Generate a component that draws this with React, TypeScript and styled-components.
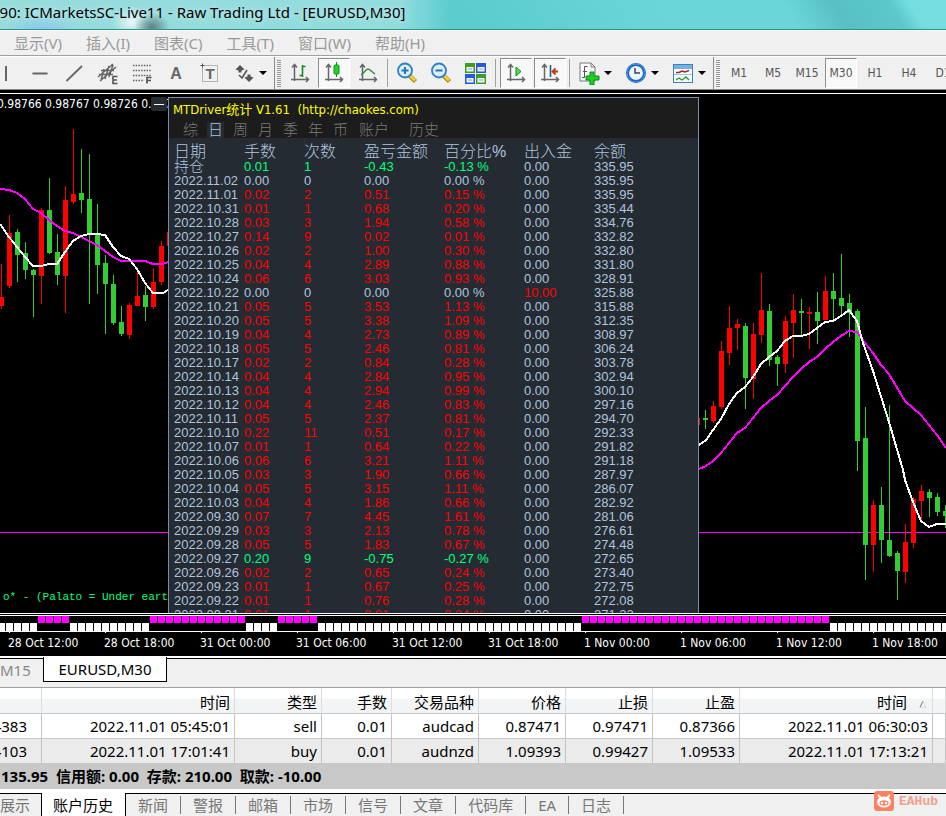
import React from "react";
import styled, { createGlobalStyle, css } from "styled-components";

const UI = `"Noto Sans", "Open Sans", "Noto Sans CJK SC", sans-serif`;
const TAHOMA = `"DejaVu Sans Condensed", "Noto Sans", "Noto Sans CJK SC", sans-serif`;
const ARIAL = `"Liberation Sans", "Noto Sans CJK SC", sans-serif`;

const GlobalStyle = createGlobalStyle`
  *, *::before, *::after { box-sizing: border-box; }
  body { margin: 0; background: #f0f0f0; font-family: ${UI}; font-size: 15px; color: #000; overflow: hidden; }
  button { font: inherit; color: inherit; background: none; border: 0; padding: 0; margin: 0; white-space: nowrap; }
`;

const Window = styled.main`
  display: flex;
  flex-direction: column;
  height: 100vh;
  min-width: 0;
  overflow: hidden;
`;

/* ---------- Title and menu ---------- */

const TitleBar = styled.header`
  height: 30px;
  flex: none;
  display: flex;
  align-items: center;
  padding-bottom: 5px;
  border-bottom: 1px solid #2f8f90;
  white-space: nowrap;
  overflow: hidden;
  background:
    radial-gradient(ellipse 36px 14px at 42px 29px, #8cc8ee 0, #8cc8ee00 100%),
    radial-gradient(ellipse 18px 14px at 152px 27px, #4d6b6ecc 0, #4d6b6e00 100%),
    radial-gradient(ellipse 20px 16px at 132px 22px, #ffffffcc 0, #ffffff00 100%),
    linear-gradient(90deg, #ffffff66 0, #ffffff55 400px, #ffffff00 450px),
    linear-gradient(60deg, #52c4c6 0, #5ccccf 50%, #69d5d9 68%, #6bd6da 83%, #57c0c4 88%, #5cc8cb 94%, #74dde0 96%);
`;

const Title = styled.h1`
  margin: 0 0 0 -9px;
  font-size: 15px;
  font-weight: 400;
  line-height: 20px;
  text-shadow: 0 0 6px #ffffffaa;
`;

const MenuBar = styled.nav`
  height: 26px;
  flex: none;
  display: flex;
  align-items: center;
  gap: 24px;
  padding-left: 14px;
  border-top: 1px solid #fff;
  border-bottom: 1px solid #a0a0a0;
  color: #999;
`;

const MenuItem = styled.button`
  line-height: 20px;
`;

/* ---------- Toolbar ---------- */

const Toolbar = styled.div`
  height: 34px;
  flex: none;
  display: flex;
  align-items: center;
  border-top: 1px solid #fff;
  border-bottom: 1px solid #8a8a8a;
  overflow: hidden;
`;

const ToolGroup = styled.div<{ $bleed?: boolean }>`
  height: 32px;
  flex: none;
  display: flex;
  align-items: center;
  gap: 2px;
  padding: 0 1px 0 2px;
  margin-left: ${(p) => (p.$bleed ? "-12px" : "0")};
  border-right: 1px solid #8a8a8a;
`;

const Grip = styled.span`
  width: 4px;
  height: 27px;
  flex: none;
  margin-right: 1px;
  background: repeating-linear-gradient(180deg, #999 0, #999 1px, transparent 1px, transparent 2px);
`;

const ToolButton = styled.button<{ $pressed?: boolean; $menu?: boolean }>`
  width: ${(p) => (p.$menu ? 45 : 32)}px;
  height: 30px;
  flex: none;
  display: flex;
  align-items: center;
  justify-content: ${(p) => (p.$menu ? "flex-start" : "center")};
  gap: 3px;
  padding-left: ${(p) => (p.$menu ? "3px" : "0")};
  border: 1px solid transparent;
  color: #555;
  font-family: ${TAHOMA};
  font-size: 12px;
  ${(p) =>
    p.$pressed &&
    css`
      border-color: #8f8f8f #fff #fff #8f8f8f;
      background: #f8f8f8;
    `}
`;

const Separator = styled.span<{ $wide?: boolean }>`
  width: 1px;
  height: 28px;
  flex: none;
  margin: 0 ${(p) => (p.$wide ? 2 : 1)}px;
  background: #a0a0a0;
`;

const Glyph = styled.svg`
  width: 24px;
  height: 24px;
  flex: none;
  display: block;
`;

const CaretShape = styled.svg`
  width: 8px;
  height: 4px;
  flex: none;
`;

const Caret = () => (
  <CaretShape viewBox="0 0 8 4" aria-hidden="true">
    <path d="M0 0h8L4 4z" fill="#000" />
  </CaretShape>
);

const Axes = () => (
  <path
    d="M6.5 4v16M3 18.5h17M4 6.5 6.5 3.5 9 6.5M18 16l2.500 2.500L18 21"
    fill="none"
    stroke="#666"
    strokeWidth="1.500"
  />
);

const icons: Record<string, React.ReactNode> = {
  vline: <path d="M12 5v15" stroke="#666" strokeWidth="2" />,
  hline: <path d="M4.500 12.500h15" stroke="#666" strokeWidth="2" />,
  trend: <path d="M4.500 20 20 5" stroke="#666" strokeWidth="1.800" />,
  channel: (
    <>
      <path
        d="M2 16 17 3M4 20 20 6M5 9.500h13M3 13.500h14M8 8 5 19M13 5 9 18M17 4l-4 12"
        fill="none"
        stroke="#666"
        strokeWidth="1.500"
      />
      <path d="M21.500 15.500H17v7h4.500M17 19h4" fill="none" stroke="#555" strokeWidth="1.600" />
    </>
  ),
  fibo: (
    <>
      <path d="M3 4.500h18M3 9.500h18M3 14.500h18M3 19.500h11" stroke="#666" strokeWidth="1.400" strokeDasharray="1.500 1.200" />
      <path d="M21.500 16.500H17v6M17 19.500h4" fill="none" stroke="#555" strokeWidth="1.700" />
    </>
  ),
  text: (
    <text x="12" y="18" textAnchor="middle" fontFamily="Liberation Sans, sans-serif" fontWeight="700" fontSize="16" fill="#666">
      A
    </text>
  ),
  label: (
    <>
      <rect x="4.500" y="4.500" width="15" height="16" fill="none" stroke="#777" strokeDasharray="1 1" />
      <path d="M2.500 4.500h4M4.500 2.500v4" stroke="#555" />
      <text x="12" y="18" textAnchor="middle" fontFamily="Liberation Sans, sans-serif" fontWeight="700" fontSize="15" fill="#666">
        T
      </text>
    </>
  ),
  arrows: (
    <>
      <path d="m8 4 4.500 4.500-3 1v2h-3v-2l-3-1zM17 21l-4.500-4.500 3-1v-2h3v2l3 1z" fill="#555" />
      <path d="m7 14 3 3 5-8" fill="none" stroke="#555" strokeWidth="1.600" />
    </>
  ),
  bars: (
    <>
      <Axes />
      <path d="M14.500 4v12M14.500 5.500h3M11.500 14.500h3" stroke="#158a24" strokeWidth="1.600" fill="none" />
    </>
  ),
  candles: (
    <>
      <Axes />
      <path d="M14.500 1v15" stroke="#158a24" />
      <rect x="12" y="4" width="5" height="9" rx="1" fill="#21d321" stroke="#158a24" />
    </>
  ),
  line: (
    <>
      <Axes />
      <path d="M5 14c3-2 5-6 7-6s4 3 7 5" fill="none" stroke="#2f8a3a" strokeWidth="1.400" />
    </>
  ),
  zoomIn: (
    <>
      <path d="m14.500 14.500 6 6" stroke="#b58513" strokeWidth="4.500" />
      <path d="m15 14.500 5 5" stroke="#f5d23c" strokeWidth="2.500" />
      <circle cx="10" cy="9.500" r="7" fill="#d7efff" stroke="#2e7fc4" strokeWidth="1.800" />
      <path d="M6.500 9.500h7M10 6v7" stroke="#2b73ad" strokeWidth="2" />
    </>
  ),
  zoomOut: (
    <>
      <path d="m14.500 14.500 6 6" stroke="#b58513" strokeWidth="4.500" />
      <path d="m15 14.500 5 5" stroke="#f5d23c" strokeWidth="2.500" />
      <circle cx="10" cy="9.500" r="7" fill="#d7efff" stroke="#2e7fc4" strokeWidth="1.800" />
      <path d="M6.500 9.500h7" stroke="#2b73ad" strokeWidth="2" />
    </>
  ),
  tile: (
    <>
      <rect x="2" y="2" width="10" height="10" fill="#3f9f1b" />
      <rect x="13" y="2" width="10" height="10" fill="#2b57d9" />
      <rect x="2" y="13" width="10" height="10" fill="#2b57d9" />
      <rect x="13" y="13" width="10" height="10" fill="#3f9f1b" />
      <path d="M3.500 6h7v4.500h-7zM14.500 6h7v4.500h-7zM3.500 17h7v4.500h-7zM14.500 17h7v4.500h-7z" fill="#eef5ff" />
      <path d="M5 8h4M16 8h4M5 19h4M16 19h4" stroke="#7fa6d8" />
    </>
  ),
  scroll: (
    <>
      <Axes />
      <path d="m12 6 5 4.500-5 4.500z" fill="#4be04b" stroke="#158a24" />
    </>
  ),
  shift: (
    <>
      <Axes />
      <path d="M12.500 4v12" stroke="#205f8f" strokeWidth="1.600" />
      <path d="M20 10.500h-5M17.500 7.500l-3 3 3 3" fill="none" stroke="#c43a0c" strokeWidth="1.800" />
    </>
  ),
  indicators: (
    <>
      <path d="M3 2h11l4 4v14H3z" fill="#fafafa" stroke="#777" />
      <path d="M14 2v4h4" fill="none" stroke="#777" />
      <path d="M10.500 5.500H7.500v11H5M6 10.500h4" fill="none" stroke="#555" />
      <path d="M13 11h4v4h5v4h-5v5h-4v-5H9v-4h4z" fill="#20d020" stroke="#0b8a12" />
    </>
  ),
  clock: (
    <>
      <circle cx="12" cy="12" r="8.500" fill="#eaf5ff" stroke="#1c62c0" strokeWidth="3" />
      <circle cx="12" cy="12" r="9" fill="none" stroke="#4a97e6" />
      <path d="M11 7v5h5" fill="none" stroke="#444" strokeWidth="1.500" />
    </>
  ),
  template: (
    <>
      <rect x="2.500" y="3.500" width="19" height="18" fill="#f4faff" stroke="#3f80bd" />
      <rect x="3" y="4" width="18" height="4" fill="#6fb1e8" />
      <path d="M5 11.500h3l3-1.500 3 1 4-1.500" fill="none" stroke="#b02222" strokeWidth="1.400" />
      <path d="M3 13.500h18" stroke="#9cc4e4" />
      <path d="m5 19 3-2 3 2 4-3 3 3" fill="none" stroke="#2b9a3a" strokeWidth="1.400" />
    </>
  ),
};

type ToolProps = { icon: string; label: string; pressed?: boolean; menu?: boolean };
const Tool = ({ icon, label, pressed, menu }: ToolProps) => (
  <ToolButton type="button" aria-label={label} title={label} $pressed={pressed} $menu={menu}>
    <Glyph viewBox="0 0 24 24" aria-hidden="true">
      {icons[icon]}
    </Glyph>
    {menu && <Caret />}
  </ToolButton>
);

/* ---------- Chart ---------- */

const ChartFrame = styled.section`
  flex: none;
  display: flex;
  flex-direction: column;
  padding-top: 3px;
  background: #000;
  color: #fff;
  border-bottom: 1px solid #fff;
`;

const ChartArea = styled.div`
  position: relative;
  height: 521px;
  overflow: hidden;
  border-top: 1px solid #fff;
  border-bottom: 1px solid #fff;
`;

const PriceChart = styled.svg`
  display: block;
  width: 100%;
  height: 519px;
`;

const Quote = styled.div`
  position: absolute;
  left: -3px;
  top: 2px;
  font-family: ${TAHOMA};
  font-size: 12px;
  line-height: 16px;
  white-space: nowrap;
`;

const Remark = styled.div`
  position: absolute;
  left: 0;
  bottom: 8px;
  width: 168px;
  overflow: hidden;
  white-space: nowrap;
  direction: rtl;
  font-family: "Liberation Mono", monospace;
  font-size: 11px;
  line-height: 16px;
  color: #00ff7f;
`;

const Collapse = styled.button`
  position: absolute;
  left: 151px;
  top: 3px;
  width: 16px;
  height: 14px;
  border-radius: 2px;
  background: #252b33;
  display: flex;
  align-items: center;
  justify-content: center;

  &::before {
    content: "";
    width: 10px;
    height: 1px;
    background: #fff;
  }
`;

const Panel = styled.section`
  position: absolute;
  left: 168px;
  top: 3px;
  bottom: 0;
  width: 531px;
  overflow: hidden;
  border: 1px solid #7b8ea8;
  border-bottom: 0;
  background: #252b33;
  color: #b0c4de;
  font-family: ${ARIAL};
`;

const PanelHead = styled.header`
  height: 40px;
  background: #1c1c1c;
`;

const PanelTitle = styled.h2`
  margin: 0;
  padding: 2px 0 0 4px;
  height: 24px;
  font-family: ${TAHOMA};
  font-size: 13px;
  line-height: 20px;
  font-weight: 400;
  color: #ffff00;
  white-space: pre;
`;

const PanelTabs = styled.div`
  display: flex;
  align-items: center;
  gap: 8px;
  padding-left: 13px;
  height: 16px;
`;

const PanelTab = styled.button<{ $active?: boolean; $wide?: boolean }>`
  min-width: 17px;
  margin: ${(p) => (p.$wide ? "0 12px 0 2px" : "0")};
  height: 16px;
  line-height: 16px;
  font-size: 15px;
  font-weight: 300;
  text-align: center;
  color: ${(p) => (p.$active ? "#b0c4de" : "#7a7a7a")};
  background: ${(p) => (p.$active ? "#252b33" : "transparent")};
`;

const StatTable = styled.table`
  margin: 6px 0 0 5px;
  width: 520px;
  border-collapse: collapse;
  table-layout: fixed;
  font-size: 13px;
`;

const StatHead = styled.th`
  padding: 0;
  height: 16px;
  font-size: 16px;
  line-height: 16px;
  font-weight: 300;
  text-align: left;
  white-space: nowrap;
`;

const tones = { flat: "#b0c4de", up: "#ff0000", down: "#00ff7f" };
type Tone = keyof typeof tones;

const StatCell = styled.td<{ $tone?: Tone; $big?: boolean }>`
  padding: 0;
  height: 14px;
  line-height: 14px;
  font-size: ${(p) => (p.$big ? 15 : 13)}px;
  font-weight: ${(p) => (p.$big ? 300 : 400)};
  white-space: nowrap;
  color: ${(p) => tones[p.$tone ?? "flat"]};
`;

const Strip = styled.svg`
  display: block;
  width: 100%;
  height: 18px;
  margin-top: 1px;
`;

const TimeAxis = styled.div`
  display: flex;
  height: 23px;
  padding-left: 8px;
  overflow: hidden;
  font-family: ${TAHOMA};
  font-size: 12px;
  line-height: 20px;
`;

const TimeLabel = styled.span`
  width: 96px;
  flex: none;
  white-space: nowrap;
`;

const GREEN = "#32cd32";
const RED = "#ff0000";

/* centre, high, low, body top, body bottom, rising */
const candles: [number, number, number, number, number, boolean][] = [
  [1, 264, 309, 297, 306, true],
  [9, 215, 288, 233, 286, true],
  [17, 229, 282, 232, 255, false],
  [25, 242, 279, 253, 270, false],
  [33, 269, 317, 270, 275, false],
  [41, 208, 304, 210, 276, true],
  [49, 178, 254, 210, 253, false],
  [57, 234, 285, 252, 275, false],
  [65, 186, 313, 200, 276, true],
  [73, 129, 204, 194, 202, true],
  [81, 149, 213, 193, 200, false],
  [89, 154, 304, 199, 234, false],
  [97, 204, 294, 234, 265, false],
  [105, 255, 334, 263, 284, false],
  [113, 275, 325, 284, 323, false],
  [121, 306, 336, 322, 334, false],
  [129, 303, 339, 305, 335, true],
  [137, 268, 306, 296, 306, true],
  [145, 286, 321, 295, 307, false],
  [153, 268, 309, 282, 307, true],
  [161, 241, 285, 246, 282, true],
  [169, 232, 246, 232, 246, true],
  [697, 418, 425, 418, 425, true],
  [705, 410, 429, 418, 420, false],
  [713, 401, 423, 406, 421, true],
  [721, 341, 409, 351, 407, true],
  [729, 306, 365, 328, 353, true],
  [737, 319, 350, 324, 328, true],
  [745, 323, 409, 326, 378, false],
  [753, 323, 399, 334, 379, true],
  [761, 273, 343, 310, 335, true],
  [769, 304, 366, 311, 360, false],
  [777, 355, 386, 357, 364, false],
  [785, 316, 373, 321, 364, true],
  [793, 294, 358, 310, 323, true],
  [801, 299, 335, 311, 313, false],
  [809, 307, 349, 312, 314, true],
  [817, 292, 344, 312, 321, false],
  [825, 276, 320, 291, 320, true],
  [833, 273, 320, 291, 299, false],
  [841, 254, 314, 298, 306, false],
  [849, 294, 337, 303, 313, false],
  [857, 309, 471, 311, 441, false],
  [865, 407, 580, 438, 545, false],
  [873, 500, 572, 505, 545, true],
  [881, 487, 563, 505, 540, false],
  [889, 405, 557, 540, 556, false],
  [897, 551, 600, 553, 571, false],
  [905, 524, 583, 542, 572, true],
  [913, 497, 548, 499, 543, true],
  [921, 485, 521, 491, 501, true],
  [929, 489, 517, 492, 498, false],
  [937, 493, 516, 497, 512, false],
  [945, 505, 528, 511, 516, false],
];

const slowAverage = [
  "0,189 9,190 17,193 25,199 33,209 41,213 49,220 57,226 65,231 73,233 81,237 89,241 97,245 105,251 113,257 121,261 129,261 145,261 153,264 163,264 168,262",
  "699,469 706,466 713,461 721,453 729,443 737,433 745,428 753,418 761,408 769,401 777,395 785,386 793,377 801,369 809,362 817,357 825,349 833,342 841,336 849,331 857,332 865,343 873,353 881,365 889,374 905,401 921,415 937,435 946,448",
];
const fastAverage = [
  "0,224 9,237 17,247 25,257 33,266 41,266 49,264 57,264 65,252 73,241 81,236 89,234 97,234 105,235 113,247 121,256 129,259 137,269 145,283 153,293 163,293 168,290",
  "699,445 706,440 713,430 721,419 729,404 737,393 745,387 753,377 761,364 769,357 777,351 785,341 793,336 801,336 809,334 817,328 825,322 833,321 841,316 849,310 857,321 863,343 873,371 889,422 903,470 905,480 913,502 921,521 929,527 937,524 946,524",
];

const trendRuns = [
  [5, 8],
  [19, 30],
  [35, 39],
  [73, 103],
];
const blocks = Array.from({ length: 119 }, (_, i) => ({
  x: i * 8 - 2,
  up: trendRuns.some(([a, b]) => i >= a && i <= b),
}));

const times = [
  "28 Oct 12:00",
  "28 Oct 18:00",
  "31 Oct 00:00",
  "31 Oct 06:00",
  "31 Oct 12:00",
  "31 Oct 18:00",
  "1 Nov 00:00",
  "1 Nov 06:00",
  "1 Nov 12:00",
  "1 Nov 18:00",
];

const stats = `持仓|0.01|1|-0.43|-0.13|0.00|335.95
2022.11.02|0.00|0|0.00|0.00|0.00|335.95
2022.11.01|0.02|2|0.51|0.15|0.00|335.95
2022.10.31|0.01|1|0.68|0.20|0.00|335.44
2022.10.28|0.03|3|1.94|0.58|0.00|334.76
2022.10.27|0.14|9|0.02|0.01|0.00|332.82
2022.10.26|0.02|2|1.00|0.30|0.00|332.80
2022.10.25|0.04|4|2.89|0.88|0.00|331.80
2022.10.24|0.06|6|3.03|0.93|0.00|328.91
2022.10.22|0.00|0|0.00|0.00|10.00|325.88
2022.10.21|0.05|5|3.53|1.13|0.00|315.88
2022.10.20|0.05|5|3.38|1.09|0.00|312.35
2022.10.19|0.04|4|2.73|0.89|0.00|308.97
2022.10.18|0.05|5|2.46|0.81|0.00|306.24
2022.10.17|0.02|2|0.84|0.28|0.00|303.78
2022.10.14|0.04|4|2.84|0.95|0.00|302.94
2022.10.13|0.04|4|2.94|0.99|0.00|300.10
2022.10.12|0.04|4|2.46|0.83|0.00|297.16
2022.10.11|0.05|5|2.37|0.81|0.00|294.70
2022.10.10|0.22|11|0.51|0.17|0.00|292.33
2022.10.07|0.01|1|0.64|0.22|0.00|291.82
2022.10.06|0.06|6|3.21|1.11|0.00|291.18
2022.10.05|0.03|3|1.90|0.66|0.00|287.97
2022.10.04|0.05|5|3.15|1.11|0.00|286.07
2022.10.03|0.04|4|1.86|0.66|0.00|282.92
2022.09.30|0.07|7|4.45|1.61|0.00|281.06
2022.09.29|0.03|3|2.13|0.78|0.00|276.61
2022.09.28|0.05|5|1.83|0.67|0.00|274.48
2022.09.27|0.20|9|-0.75|-0.27|0.00|272.65
2022.09.26|0.02|2|0.65|0.24|0.00|273.40
2022.09.23|0.01|1|0.67|0.25|0.00|272.75
2022.09.22|0.01|1|0.76|0.28|0.00|272.08
2022.09.21|0.01|1|0.91|0.34|0.00|271.32`
  .split("\n")
  .map((line) => line.split("|"));

const StatRow = ({ row }: { row: string[] }) => {
  const [day, lots, count, profit, percent, cash, balance] = row;
  const value = Number(profit);
  const tone: Tone = value > 0 ? "up" : value < 0 ? "down" : "flat";
  return (
    <tr>
      <StatCell $big={day === "持仓"}>{day}</StatCell>
      <StatCell $tone={tone}>{lots}</StatCell>
      <StatCell $tone={tone}>{count}</StatCell>
      <StatCell $tone={tone}>{profit}</StatCell>
      <StatCell $tone={tone}>{percent} %</StatCell>
      <StatCell $tone={Number(cash) > 0 ? "up" : "flat"}>{cash}</StatCell>
      <StatCell>{balance}</StatCell>
    </tr>
  );
};

const Chart = () => (
  <ChartFrame aria-label="EURUSD,M30">
    <ChartArea>
      <PriceChart aria-hidden="true">
        <g transform="translate(0 -94)" shapeRendering="crispEdges">
          <rect x="0" y="532" width="100%" height="1" fill="#ff00ff" />
          {candles.map(([x, high, low, top, bottom, rising]) => (
            <g key={x} fill={rising ? RED : GREEN}>
              <rect x={x} y={high} width="1" height={low - high} />
              <rect x={x - 2} y={top} width="5" height={bottom - top} />
            </g>
          ))}
          {slowAverage.map((points) => (
            <polyline key={points} points={points} fill="none" stroke="#ff00ff" strokeWidth="2" />
          ))}
          {fastAverage.map((points) => (
            <polyline key={points} points={points} fill="none" stroke="#fff" strokeWidth="2" />
          ))}
        </g>
      </PriceChart>
      <Quote>0.98766 0.98767 0.98726 0.98742</Quote>
      <Remark>
        <bdi dir="ltr">o* - (Palato = Under eart</bdi>
      </Remark>
      <Collapse type="button" aria-label="收起" />
      <Panel>
        <PanelHead>
          <PanelTitle>{"MTDriver统计 V1.61  (http://chaokes.com)"}</PanelTitle>
          <PanelTabs>
            {["综", "日", "周", "月", "季", "年", "币", "账户", "历史"].map((tab) => (
              <PanelTab key={tab} type="button" $active={tab === "日"} $wide={tab === "账户"}>
                {tab}
              </PanelTab>
            ))}
          </PanelTabs>
        </PanelHead>
        <StatTable>
          <colgroup>
            {[70, 60, 60, 80, 80, 70, 100].map((width, i) => (
              <col key={i} width={width} />
            ))}
          </colgroup>
          <thead>
            <tr>
              {["日期", "手数", "次数", "盈亏金额", "百分比%", "出入金", "余额"].map((name) => (
                <StatHead key={name} scope="col">
                  {name}
                </StatHead>
              ))}
            </tr>
          </thead>
          <tbody>
            {stats.map((row) => (
              <StatRow key={row[0]} row={row} />
            ))}
          </tbody>
        </StatTable>
      </Panel>
    </ChartArea>
    <Strip aria-hidden="true">
      <rect width="100%" height="1" fill="#fff" />
      {blocks.map(({ x, up }) => (
        <rect key={x} x={x} y={up ? 1 : 8} width="7" height={up ? 7 : 9} fill={up ? "#ff00ff" : "#fff"} />
      ))}
      <rect y="16" width="100%" height="1" fill="#fff" />
      {times.map((time, i) => (
        <rect key={time} x={9 + i * 96} y="17" width="1" height="3" fill="#fff" />
      ))}
    </Strip>
    <TimeAxis>
      {times.map((time) => (
        <TimeLabel key={time}>{time}</TimeLabel>
      ))}
    </TimeAxis>
  </ChartFrame>
);

/* ---------- Chart tabs ---------- */

const ChartTabs = styled.div`
  height: 31px;
  flex: none;
  display: flex;
  align-items: flex-start;
  overflow: hidden;
  border-bottom: 1px solid #a0a0a0;
  background: #f0f0f0;
  box-shadow: inset 0 1px #fff, inset 0 2px #000;
`;

const ChartTab = styled.button<{ $active?: boolean }>`
  width: ${(p) => (p.$active ? 124 : 43)}px;
  height: 25px;
  flex: none;
  line-height: 22px;
  color: #888;
  text-align: left;
  ${(p) =>
    p.$active &&
    css`
      text-align: center;
      color: #000;
      background: #fff;
      border: 1px solid #000;
      border-top: 0;
    `}
`;

/* ---------- Terminal ---------- */

const OrderTable = styled.table`
  flex: none;
  width: 100%;
  border-collapse: separate;
  border-spacing: 0;
  table-layout: fixed;
`;

const OrderHead = styled.th`
  height: 26px;
  padding: 2px 4px 0 0;
  line-height: 20px;
  font-weight: 400;
  text-align: right;
  white-space: nowrap;
  background: linear-gradient(#fff 0, #fff 40%, #f4f5f6 45%, #f2f3f5 100%);
  border-right: 1px solid #dcdcdc;
  border-bottom: 1px solid #c8c8c8;
`;

const SortMark = styled.svg`
  width: 8px;
  height: 8px;
  margin: 0 1px 0 12px;
`;

const OrderRow = styled.tr`
  background: #fff;
  &:nth-child(even) {
    background: #ebebeb;
  }
`;

const OrderCell = styled.td`
  height: 25px;
  padding: 0 4px 0 0;
  line-height: 20px;
  text-align: right;
  white-space: nowrap;
  border-right: 1px solid #c4c4c4;
  border-bottom: 1px solid #c8c8c8;
  &:first-child {
    padding-right: 14px;
  }
`;

const Ticket = styled.span`
  display: flex;
  justify-content: flex-end;
`;

const Summary = styled.div`
  height: 25px;
  flex: none;
  padding-left: 1px;
  line-height: 24px;
  font-weight: 700;
  white-space: pre;
  background: #c8c8c8;
`;

const TerminalTabs = styled.div`
  position: relative;
  flex: 1;
  min-height: 27px;
  display: flex;
  align-items: flex-start;
  padding-top: 4px;
  background: linear-gradient(#fff 0, #fff 4px, #000 4px, #000 5px, #f0f0f0 5px);
`;

const TerminalTab = styled.button<{ $active?: boolean }>`
  height: 24px;
  flex: none;
  line-height: 24px;
  color: #777;

  ${(p) =>
    p.$active
      ? css`
          padding: 0 12px 0 11px;
          color: #000;
          background: #fff;
          border: solid #000;
          border-width: 0 1px;
        `
      : css`
          display: flex;
          align-items: center;

          &::before {
            content: "";
            width: 12px;
          }

          &::after {
            content: "";
            width: 13px;
            height: 18px;
            border-right: 1px solid #777;
          }
        `}

  &:first-child::before {
    width: 0;
  }
  &:first-child::after {
    width: 11px;
    border-color: transparent;
  }
`;

const Badge = styled.a`
  position: absolute;
  right: 8px;
  top: 2px;
  height: 20px;
  display: flex;
  align-items: center;
  gap: 5px;
  color: #f0a08c;
  font: 700 13px "Liberation Mono", monospace;
  text-decoration: none;
`;

const BadgeMark = styled.svg`
  width: 20px;
  height: 20px;
`;

const orders = [
  ["4383", "2022.11.01 05:45:01", "sell", "0.01", "audcad", "0.87471", "0.97471", "0.87366", "2022.11.01 06:30:03", ""],
  ["4103", "2022.11.01 17:01:41", "buy", "0.01", "audnzd", "1.09393", "0.99427", "1.09533", "2022.11.01 17:13:21", ""],
];

export default function App() {
  return (
    <Window>
      <GlobalStyle />
      <TitleBar>
        <Title>090: ICMarketsSC-Live11 - Raw Trading Ltd - [EURUSD,M30]</Title>
      </TitleBar>
      <MenuBar>
        {["显示(V)", "插入(I)", "图表(C)", "工具(T)", "窗口(W)", "帮助(H)"].map((name) => (
          <MenuItem key={name} type="button">
            {name}
          </MenuItem>
        ))}
      </MenuBar>
      <Toolbar>
        <ToolGroup $bleed>
          <Tool icon="vline" label="垂直线" />
          <Tool icon="hline" label="水平线" />
          <Tool icon="trend" label="趋势线" />
          <Tool icon="channel" label="等距通道" />
          <Tool icon="fibo" label="斐波那契" />
          <Tool icon="text" label="文字" />
          <Tool icon="label" label="文本标签" />
          <Tool icon="arrows" label="箭头" menu />
        </ToolGroup>
        <ToolGroup>
          <Grip />
          <Tool icon="bars" label="柱状图" />
          <Tool icon="candles" label="蜡烛图" pressed />
          <Tool icon="line" label="折线图" />
          <Separator />
          <Tool icon="zoomIn" label="放大" />
          <Tool icon="zoomOut" label="缩小" />
          <Tool icon="tile" label="平铺窗口" />
          <Separator $wide />
          <Tool icon="scroll" label="自动滚动" pressed />
          <Tool icon="shift" label="图表平移" pressed />
          <Separator />
          <Tool icon="indicators" label="指标" menu />
          <Tool icon="clock" label="时间周期" menu />
          <Tool icon="template" label="模板" menu />
        </ToolGroup>
        <ToolGroup>
          <Grip />
          {["M1", "M5", "M15", "M30", "H1", "H4", "D1"].map((period) => (
            <ToolButton key={period} type="button" $pressed={period === "M30"}>
              {period}
            </ToolButton>
          ))}
        </ToolGroup>
      </Toolbar>
      <Chart />
      <ChartTabs>
        <ChartTab type="button">M15</ChartTab>
        <ChartTab type="button" $active>
          EURUSD,M30
        </ChartTab>
      </ChartTabs>
      <OrderTable>
        <colgroup>
          {[42, 193, 87, 70, 87, 87, 87, 87, 193].map((width, i) => (
            <col key={i} width={width} />
          ))}
          <col />
        </colgroup>
        <thead>
          <tr>
            {["", "时间", "类型", "手数", "交易品种", "价格", "止损", "止盈", "时间", ""].map((name, i) => (
              <OrderHead key={i} scope="col">
                {name}
                {i === 8 && (
                  <SortMark viewBox="0 0 8 8" aria-hidden="true">
                    <path d="M1 7.500 4 1" stroke="#777" fill="none" />
                    <path d="m4 1 3 6.500H1" stroke="#ddd" fill="none" />
                  </SortMark>
                )}
              </OrderHead>
            ))}
          </tr>
        </thead>
        <tbody>
          {orders.map((order) => (
            <OrderRow key={order[0]}>
              {order.map((value, i) => (
                <OrderCell key={i}>{i === 0 ? <Ticket>{value}</Ticket> : value}</OrderCell>
              ))}
            </OrderRow>
          ))}
        </tbody>
      </OrderTable>
      <Summary>{"135.95  信用额: 0.00  存款: 210.00  取款: -10.00"}</Summary>
      <TerminalTabs>
        {["展示", "账户历史", "新闻", "警报", "邮箱", "市场", "信号", "文章", "代码库", "EA", "日志"].map((name) => (
          <TerminalTab key={name} type="button" $active={name === "账户历史"}>
            {name}
          </TerminalTab>
        ))}
        <Badge href="#eahub">
          <BadgeMark viewBox="0 0 20 20" aria-hidden="true">
            <rect width="20" height="20" rx="3" fill="#ff8163" />
            <path d="M4 4l3 3M16 4l-3 3" stroke="#fff" strokeWidth="2" />
            <ellipse cx="10" cy="11" rx="7" ry="5.500" fill="#fff" />
            <ellipse cx="10" cy="12" rx="4.500" ry="2.800" fill="#ff8163" />
            <circle cx="8" cy="12" r="1.200" fill="#fff" />
            <circle cx="12" cy="12" r="1.200" fill="#fff" />
          </BadgeMark>
          EAHub
        </Badge>
      </TerminalTabs>
    </Window>
  );
}
